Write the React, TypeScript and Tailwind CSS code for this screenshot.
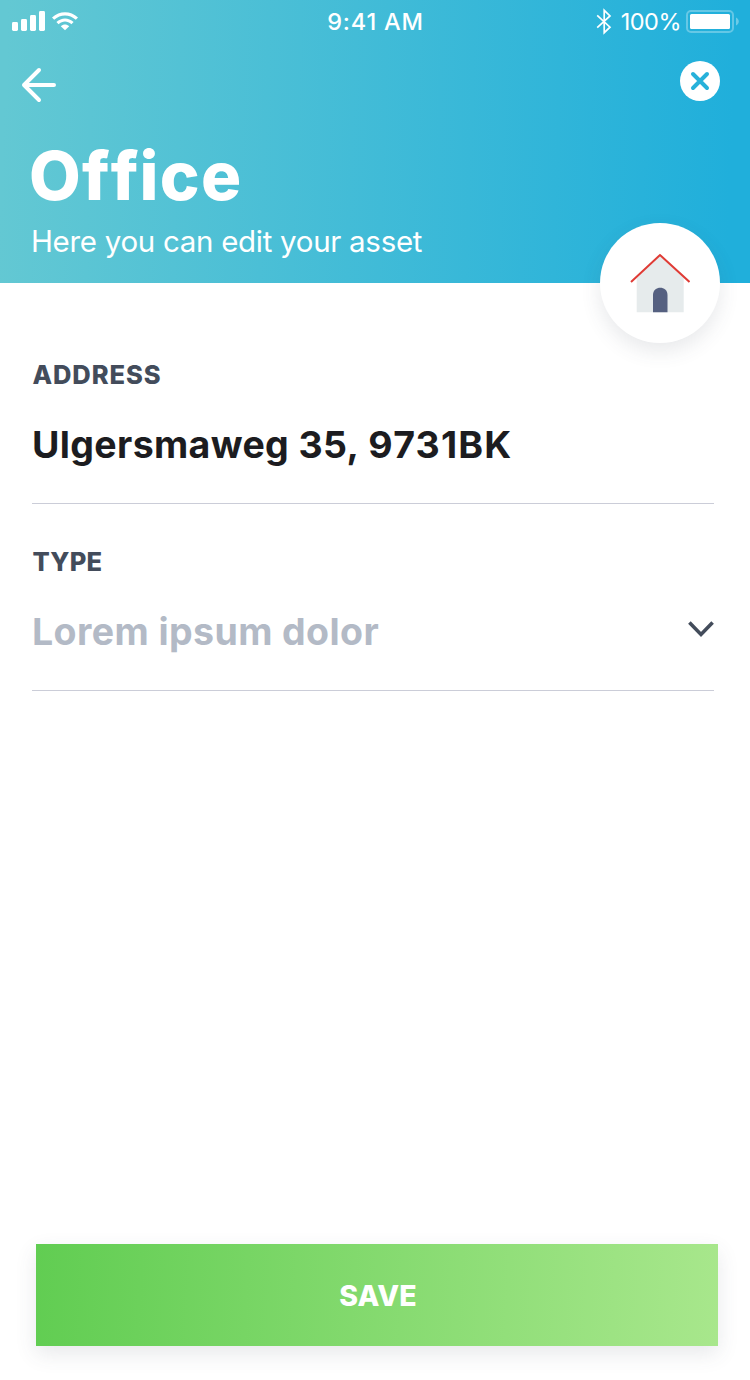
import type { ReactNode } from "react";

function StatusBar() {
  return (
    <div className="grid h-[43px] grid-cols-3 items-start px-3 pr-[11px] text-[24px] leading-[44px]">
      <div className="flex pt-[10px]">
        <svg width="68" height="22" viewBox="0 0 68 22" fill="white">
          <rect x="0" y="12" width="6" height="9" rx="1.4" />
          <rect x="9" y="9" width="6" height="12" rx="1.4" />
          <rect x="18" y="5" width="6" height="16" rx="1.4" />
          <rect x="27" y="1" width="6" height="20" rx="1.4" />
          <path d="M40 7.6C47.5 .6 58.500 .6 66 7.600L63.800 9.800C57.500 4.100 48.500 4.100 42.200 9.800Z" />
          <path d="M44.400 12C49.500 7.300 56.500 7.300 61.600 12L59.400 14.200C55.500 10.700 50.500 10.700 46.600 14.200Z" />
          <path d="M48.800 16.300C51.400 14 54.600 14 57.200 16.300L53 20.300Z" />
        </svg>
      </div>
      <div className="whitespace-nowrap text-center text-[23.500px] font-medium tracking-[0.8px]">9:41 AM</div>
      <div className="flex justify-end">
        <svg className="mt-[8px]" width="16" height="28" viewBox="0 0 16 28" fill="none" stroke="white" strokeWidth="1.7">
          <path d="M1.200 7.300L14 19.200L8.200 24.700V2.300L14 8L1.200 19.700" />
        </svg>
        <div className="ml-[9px] whitespace-nowrap text-[23.500px] tracking-[-0.5px]">100%</div>
        <svg className="ml-[5px] mt-[10px]" width="53" height="23" viewBox="0 0 53 23">
          <rect x="1" y="1" width="46" height="21" rx="4" fill="none" stroke="white" strokeOpacity=".3" strokeWidth="2" />
          <rect x="4" y="4" width="40" height="15" rx="1.500" fill="white" />
          <path d="M50 7.500C53.700 9 53.700 14 50 15.500Z" fill="white" fillOpacity=".35" />
        </svg>
      </div>
    </div>
  );
}

function HouseIcon() {
  return (
    <svg width="60" height="60" viewBox="0 0 60 60" fill="none">
      <path d="M6.700 25L30 3L53.700 25V59.300H6.700Z" fill="#e6ebec" />
      <path d="M23 59.300V42C23 32.300 37.500 32.300 37.500 42V59.300Z" fill="#556080" />
      <path d="M1 29L30 2L59.500 29" stroke="#df3b35" strokeWidth="2" />
    </svg>
  );
}

function Field({ label, children }: { label: ReactNode; children: ReactNode }) {
  return (
    <div className="h-[187px] border-b border-[#cbcdd8] pt-[41px]">
      <div className="ml-[0.500px] h-[34px] text-[25.5px] font-extrabold leading-[34px] tracking-[0.3px] text-[#434c5b]">{label}</div>
      <div className="mt-[28px] flex items-start justify-between text-[37.500px] font-bold leading-[49px]">{children}</div>
    </div>
  );
}

export default function App() {
  return (
    <div className="flex h-[1380px] w-[750px] flex-col bg-white font-['Inter',sans-serif]">
      <header className="relative h-[283px] bg-[linear-gradient(92deg,#63c8d3_1%,#20afdb_97%)] text-white">
        <StatusBar />
        <div className="flex h-[70px] items-start justify-between pl-[21px] pr-[30px] pt-[18px]">
          <button aria-label="Back" className="mt-[5px]">
            <svg width="37" height="37" viewBox="0 0 37 37" fill="none" stroke="white" strokeWidth="4" strokeLinecap="round" strokeLinejoin="round">
              <path d="M33 19H3M18 4L3 19L18 34" />
            </svg>
          </button>
          <button aria-label="Close">
            <svg width="40" height="40" viewBox="0 0 40 40">
              <circle cx="20" cy="20" r="20" fill="white" />
              <path d="M13 13L27 27M27 13L13 27" fill="none" stroke="#27b1da" strokeWidth="4" strokeLinecap="round" />
            </svg>
          </button>
        </div>
        <div className="pl-[29px]">
          <h1 className="mt-[23px] h-[80px] w-fit text-[67px] font-extrabold leading-[80px] tracking-[1.300px] [font-kerning:none]">Office</h1>
          <p className="ml-[2px] mt-[5px] w-fit text-[29.500px] font-normal leading-[40px] tracking-[-0.3px]">Here you can edit your asset</p>
        </div>
        <div className="absolute left-[600px] top-[223px] flex size-[120px] items-center justify-center rounded-full bg-white shadow-[0_8px_20px_rgba(67,76,91,0.12)]">
          <HouseIcon />
        </div>
      </header>
      <main className="ml-[32px] w-[682px] pt-[34px]">
        <Field label={<span className="tracking-[0.9px]">ADDRESS</span>}>
          <span className="tracking-[0.35px] text-[#1c1c20]">
            Ulgersmaweg 35, <span className="ml-px tracking-[1.200px]">9731BK</span>
          </span>
        </Field>
        <Field label="TYPE">
          <span className="tracking-[0.4px] text-[#b3bac6]">Lorem ipsum dolor</span>
          <svg className="mt-[14px]" width="26" height="17" viewBox="0 0 26 17" fill="none" stroke="#434c5b" strokeWidth="3.6">
            <path d="M1.400 1.500L13 13.400L24.600 1.500" />
          </svg>
        </Field>
      </main>
      <button className="mb-[34px] ml-[36px] mt-auto h-[102px] w-[682px] bg-[linear-gradient(93deg,#61cd52,#a8e78c)] pl-[2px] pt-[2px] text-[28.500px] font-extrabold leading-[40px] tracking-[0.1px] text-white shadow-[0_8px_20px_rgba(67,76,91,0.12)]">
        SAVE
      </button>
    </div>
  );
}
